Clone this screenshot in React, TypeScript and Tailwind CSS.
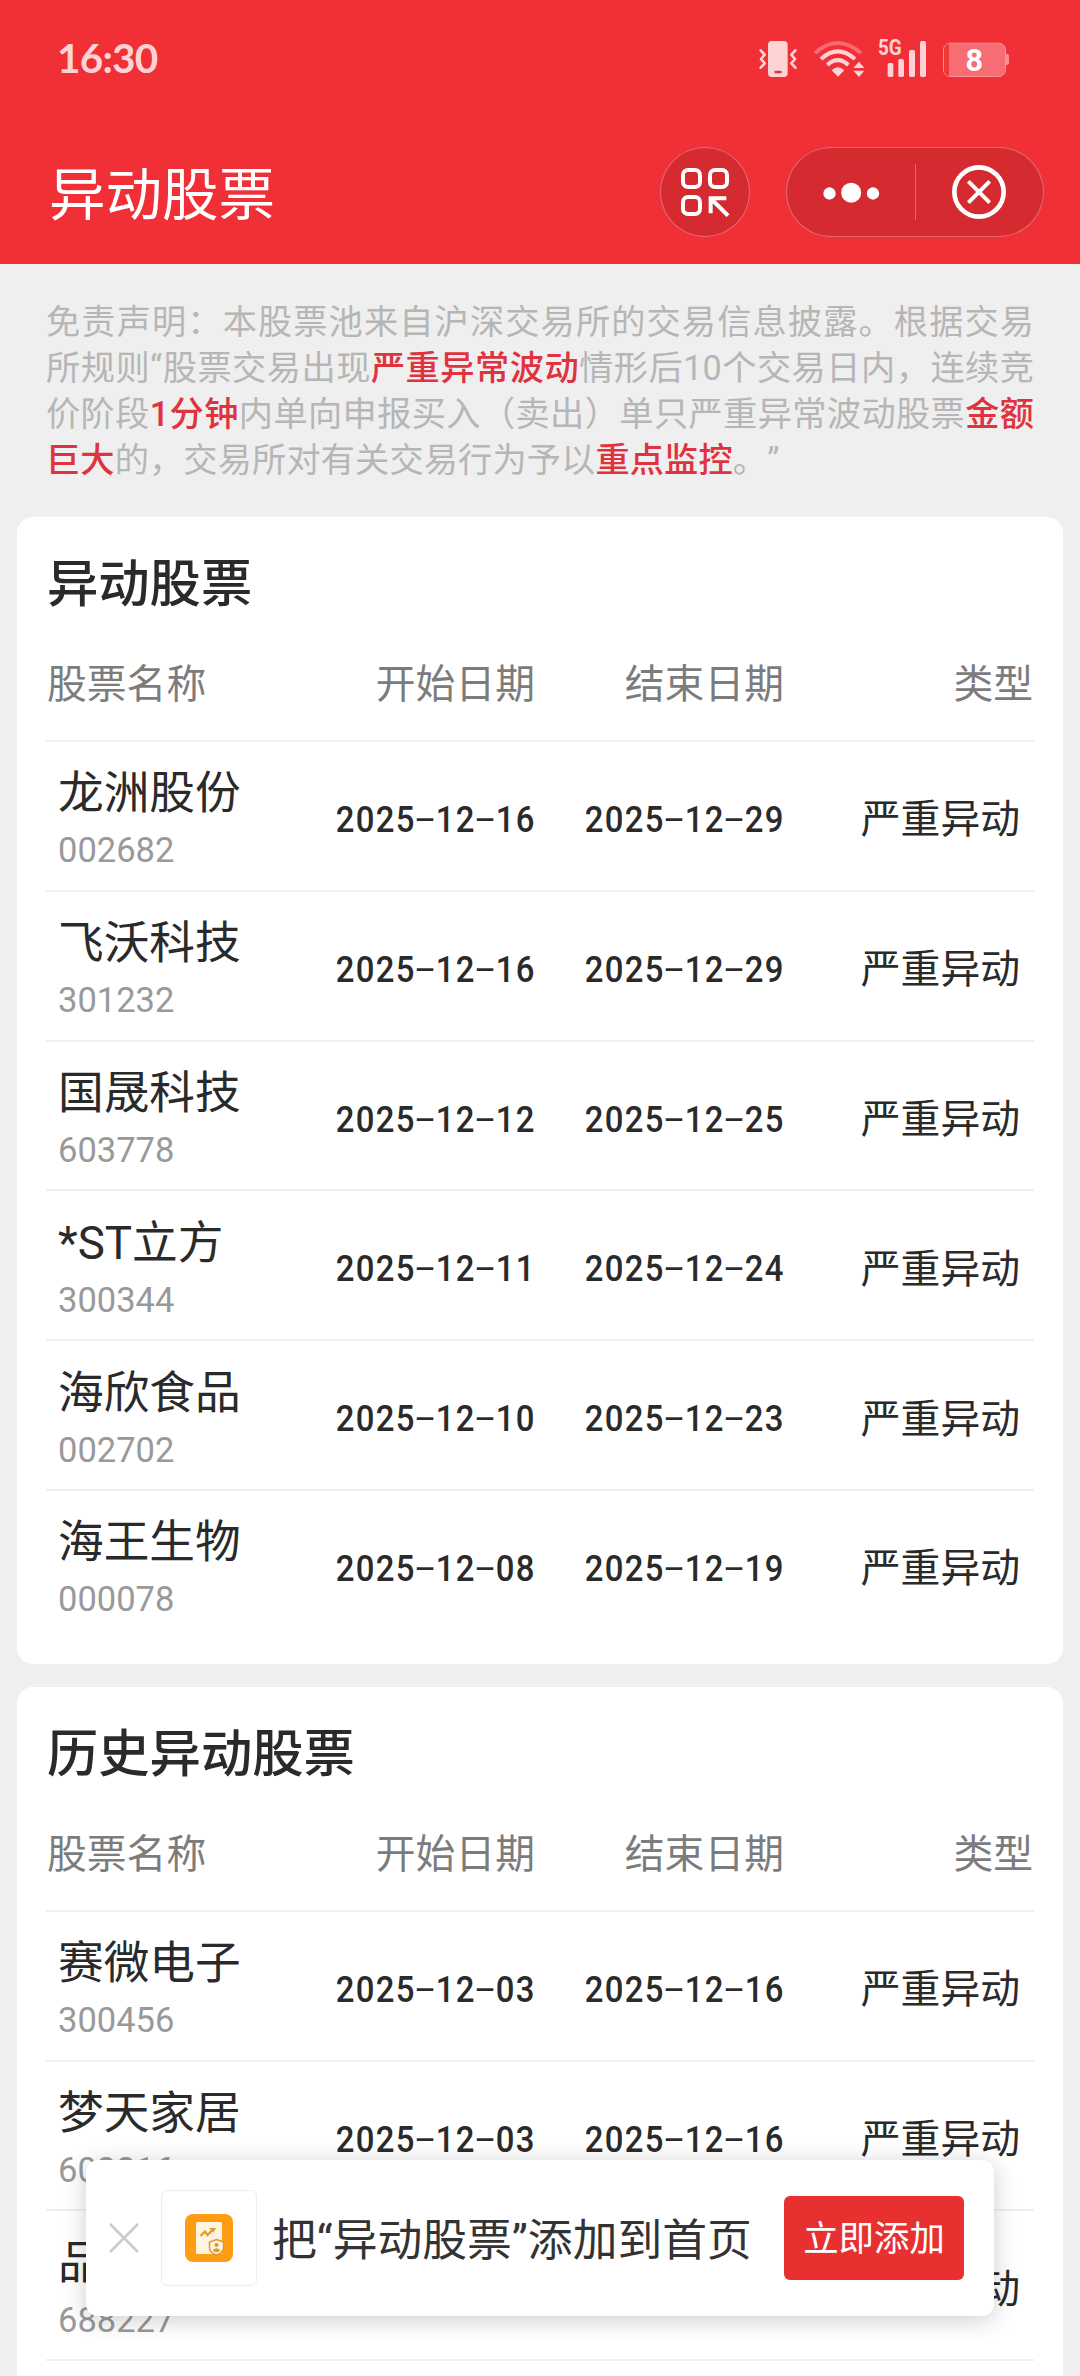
import React from "react";

type Stock = { name: string; code: string; start: string; end: string };

const CURRENT: Stock[] = [
  { name: "龙洲股份", code: "002682", start: "2025-12-16", end: "2025-12-29" },
  { name: "飞沃科技", code: "301232", start: "2025-12-16", end: "2025-12-29" },
  { name: "国晟科技", code: "603778", start: "2025-12-12", end: "2025-12-25" },
  { name: "*ST立方", code: "300344", start: "2025-12-11", end: "2025-12-24" },
  { name: "海欣食品", code: "002702", start: "2025-12-10", end: "2025-12-23" },
  { name: "海王生物", code: "000078", start: "2025-12-08", end: "2025-12-19" },
];

const HISTORY: Stock[] = [
  { name: "赛微电子", code: "300456", start: "2025-12-03", end: "2025-12-16" },
  { name: "梦天家居", code: "603216", start: "2025-12-03", end: "2025-12-16" },
  { name: "品高股份", code: "688227", start: "2025-12-03", end: "2025-12-16" },
  { name: "", code: "", start: "", end: "" },
];

function StatusBar() {
  return (
    <div className="flex h-[120px] items-start justify-between pl-[57px] pr-[70px]">
      <span className="mt-[34px] font-['Lato'] text-[40.5px] leading-[48px] font-bold tracking-[-0.8px] text-[#ffd3d5]">
        16:30
      </span>
      <div className="mt-[38px] flex h-[42px] text-[#ffd3d5]">
        {/* vibrate */}
        <svg className="h-[42px] w-[42px]" viewBox="351 114 126 126" fill="none">
          <rect x="384" y="123" width="59" height="108" rx="11" fill="currentColor" />
          <rect x="403" y="212" width="22" height="8" rx="3" fill="#d8383f" />
          <path d="M362 151 L374 164 L363 177 L374 190 L362 203 M466 151 L454 164 L465 177 L454 190 L466 203" stroke="currentColor" strokeWidth="8" strokeLinecap="round" strokeLinejoin="round" />
        </svg>
        {/* wifi */}
        <svg className="ml-[13px] h-[42px] w-[54px]" viewBox="516 114 162 126" fill="none">
          <path d="M525 159 Q593 99 663 159" stroke="#f86a70" strokeWidth="12" />
          <path d="M543 177 Q593 131 645 177 M562 195 Q593 166 625 195" stroke="currentColor" strokeWidth="12" />
          <path d="M575 211 Q593 192 613 211 L594 230 Z" fill="currentColor" />
          <path d="M640 204 L657 185 L673 204 Z M640 212 L673 212 L657 231 Z" fill="currentColor" />
        </svg>
        {/* cellular signal */}
        <div className="relative ml-[11px] h-[42px] w-[53px]">
          <svg className="h-[42px] w-[53px]" viewBox="711 114 159 126" fill="currentColor">
            <rect x="743" y="189" width="17" height="42" rx="5" />
            <rect x="775" y="177" width="17" height="54" rx="5" />
            <rect x="807" y="150" width="18" height="81" rx="5" />
            <rect x="840" y="123" width="18" height="108" rx="5" />
          </svg>
          <span className="absolute top-[-3px] left-px origin-left scale-x-88 font-['Roboto'] text-[21.5px] leading-[26px] font-bold">5G</span>
        </div>
        {/* battery */}
        <svg className="ml-[10px] h-[42px] w-[70px]" viewBox="900 114 210 126">
          <path d="M1097 161 h3 q7 0 7 7 v20 q0 7 -7 7 h-3 z" fill="#fa9095" />
          <rect x="910.5" y="129.5" width="186" height="100" rx="20" fill="#f76d73" stroke="#fa9095" strokeWidth="3" />
          <path d="M927 131 v97 q-15 -2 -15 -18 v-61 q0 -16 15 -18" fill="#ee3a36" />
          <text x="1003" y="214" textAnchor="middle" fontFamily="Roboto" fontWeight="700" fontSize="92" fill="#fff">8</text>
        </svg>
      </div>
    </div>
  );
}

function TitleBar() {
  return (
    <div className="flex h-[144px] items-start pt-[27px] pl-[49px] pr-[36px]">
      <h1 className="mt-[9px] flex-1 text-[56.5px] leading-[80px] text-white">异动股票</h1>
      <button className="mr-[36px] flex h-[90px] w-[90px] items-center justify-center rounded-full border border-white/30 bg-[#d52a2f]">
        <svg className="h-[50px] w-[50px]" viewBox="120 501 150 150" fill="none" stroke="#fff">
          <rect x="129" y="510" width="51" height="51" rx="15" strokeWidth="12" />
          <rect x="210" y="510" width="51" height="51" rx="15" strokeWidth="12" />
          <rect x="129" y="591" width="51" height="51" rx="15" strokeWidth="12" />
          <path d="M212 640 V595 H259 M214 597 L264 647" strokeWidth="12" />
        </svg>
      </button>
      <div className="flex h-[90px] w-[258px] items-center rounded-full border border-white/30 bg-[#d52a2f]">
        <svg className="h-[88px] w-[128px]" viewBox="441 444 384 264" fill="#fff">
          <circle cx="568.5" cy="580.5" r="18.5" />
          <circle cx="633.5" cy="578" r="30" />
          <circle cx="699" cy="580.5" r="18.5" />
        </svg>
        <div className="h-[56px] w-px bg-white/30" />
        <svg className="ml-[33px] h-[60px] w-[60px]" viewBox="924 486 180 180" fill="none" stroke="#fff">
          <circle cx="1014" cy="576" r="74" strokeWidth="14" />
          <path d="M982 544 L1046 608 M1046 544 L982 608" strokeWidth="12" />
        </svg>
      </div>
    </div>
  );
}

function Red({ children }: { children: React.ReactNode }) {
  return <span className="font-medium text-[#df3340]">{children}</span>;
}

function Disclaimer() {
  return (
    <div className="h-[253px] px-[46px] pt-[35px] text-[34.2px] leading-[46px] whitespace-nowrap text-[#b6b6b6] [text-spacing-trim:space-all]">
      <p className="[text-align-last:justify]">免责声明：本股票池来自沪深交易所的交易信息披露。根据交易</p>
      <p className="[text-align-last:justify]">
        所规则“股票交易出现<Red>严重异常波动</Red>情形后10个交易日内，连续竞
      </p>
      <p className="[text-align-last:justify]">
        价阶段<Red>1分钟</Red>内单向申报买入（卖出）单只严重异常波动股票<Red>金额</Red>
      </p>
      <p className="tracking-[0.15px]">
        <Red>巨大</Red>的，交易所对有关交易行为予以<Red>重点监控</Red>。<span>”</span>
      </p>
    </div>
  );
}

function DateText({ value }: { value: string }) {
  return (
    <span className="flex justify-end pt-[9px] font-['Roboto'] text-[36.5px] font-medium">
      {value.split("").map((ch, i) => (
        <span
          key={i}
          className={
            ch === "-"
              ? "flex w-[20px] -translate-y-[1px] scale-x-190 justify-center font-normal"
              : "flex w-[20px] scale-x-90 justify-center"
          }
        >
          {ch}
        </span>
      ))}
    </span>
  );
}

const COLS = "grid grid-cols-[240px_249px_249px_1fr]";

function StockCard({ title, rows }: { title: string; rows: Stock[] }) {
  return (
    <section className="rounded-[16px] bg-white px-[29px] pb-[23px] text-[#2a2a2a]">
      <h2 className="h-[132px] pt-[31px] pl-px text-[51.3px] leading-[74px] font-medium">{title}</h2>
      <div className={COLS + " h-[93px] border-b-2 border-[#efefef] pt-[16px] text-[39.8px] leading-[40px] text-[#7c7c7c]"}>
        <span className="pl-px">股票名称</span>
        <span className="text-right">开始日期</span>
        <span className="text-right">结束日期</span>
        <span className="pr-px text-right">类型</span>
      </div>
      {rows.map((r, i) => (
        <div key={i} className={COLS + " h-[149.8px] items-center border-b-2 border-[#efefef] last:border-transparent"}>
          <div className="pt-[4px] pl-[12px]">
            <div className="text-[45.7px] leading-[64px] whitespace-nowrap">{r.name}</div>
            <div className="h-[47px] font-['Roboto'] text-[34.5px] leading-[48px] text-[#999]">{r.code}</div>
          </div>
          <DateText value={r.start} />
          <DateText value={r.end} />
          <span className="pt-[9px] pr-[14px] text-right text-[39.8px] leading-[52px]">{r.name && "严重异动"}</span>
        </div>
      ))}
    </section>
  );
}

function AddToHome() {
  return (
    <div className="absolute top-[2160px] left-[86px] flex h-[156px] w-[908px] items-center rounded-[12px] bg-white pl-[23px] pr-[30px] shadow-[0_4px_24px_rgba(0,0,0,0.2)]">
      <svg className="h-[30px] w-[30px]" viewBox="0 0 30 30" stroke="#ccc" strokeWidth="2.5">
        <path d="M1 1 L29 29 M29 1 L1 29" />
      </svg>
      <div className="ml-[22px] flex h-[96px] w-[96px] items-center justify-center rounded-[6px] border border-[#eee]">
        <svg className="h-[48px] w-[48px]" viewBox="0 0 48 48" fill="none">
          <rect width="48" height="48" rx="8" fill="#ff9d12" />
          <rect x="11" y="8" width="26" height="32" rx="1.5" fill="#fff4e0" />
          <path d="M15.5 22 L20 17.5 L22.5 21 L28 15.5" stroke="#e09a2c" strokeWidth="2.2" />
          <path d="M24 14 H31 L28.5 18.5 Z" fill="#e09a2c" />
          <path d="M31.5 25.5 L38.5 28 V34 Q38 39 31.500 41 Q25 39 24.500 34 V28 Z" fill="#fff4e0" stroke="#e09a2c" strokeWidth="1.5" />
          <circle cx="31.5" cy="31" r="2" fill="#e09a2c" />
          <path d="M27.5 36.5 Q31.5 32 35.5 36.5 Q31.5 40 27.5 36.5" fill="#e09a2c" />
        </svg>
      </div>
      <span className="ml-[15px] flex-1 pt-[5px] text-[44.8px] leading-[60px] whitespace-nowrap text-[#333]">把“异动股票”添加到首页</span>
      <button className="h-[84px] w-[180px] rounded-[6px] bg-[#e83030] pt-[3px] text-[35.4px] leading-[81px] text-white">立即添加</button>
    </div>
  );
}

export default function App() {
  return (
    <div className="relative h-[2376px] w-[1080px] overflow-hidden bg-[#efefef] font-['Roboto','Noto_Sans_CJK_SC',sans-serif]">
      <header className="bg-[#f12f37]">
        <StatusBar />
        <TitleBar />
      </header>
      <Disclaimer />
      <main className="flex flex-col gap-[23px] px-[17px]">
        <StockCard title="异动股票" rows={CURRENT} />
        <StockCard title="历史异动股票" rows={HISTORY} />
      </main>
      <AddToHome />
    </div>
  );
}
